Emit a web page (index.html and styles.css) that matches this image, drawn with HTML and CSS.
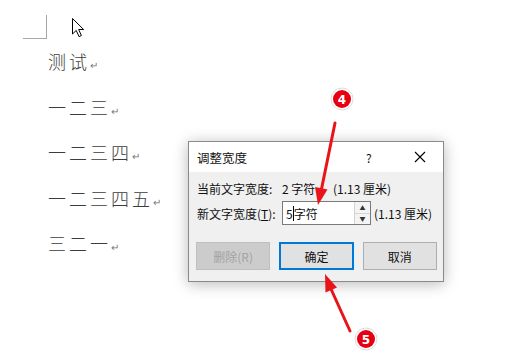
FILE: index.html
```html
<!DOCTYPE html>
<html lang="zh">
<head>
  <meta charset="UTF-8">
  <title>调整宽度</title>
  <link rel="stylesheet" href="styles.css">
</head>
<body>
  <!-- 文档区域 -->
  <div class="page">
    <div class="corner"></div>
    <div class="lines">
      <p>测试<span class="mark">↵</span></p>
      <p>一二三<span class="mark">↵</span></p>
      <p>一二三四<span class="mark">↵</span></p>
      <p>一二三四五<span class="mark">↵</span></p>
      <p>三二一<span class="mark">↵</span></p>
    </div>
  </div>

  <svg class="pointer" width="14" height="21" viewBox="0 0 14 21">
    <path d="M1.5 1.5 L1.5 17 L5.2 13.4 L8 19.6 L10.4 18.6 L7.7 12.5 L12.6 12.5 Z" fill="#fff" stroke="#000" stroke-width="1" stroke-linejoin="round"/>
  </svg>

  <!-- 对话框 -->
  <div class="dialog">
    <div class="titlebar">
      <span class="title">调整宽度</span>
      <span class="help">?</span>
      <span class="close">
        <svg width="12" height="12" viewBox="0 0 12 12"><path d="M1 1 L11 11 M11 1 L1 11" stroke="#000" stroke-width="1.1"/></svg>
      </span>
    </div>
    <div class="content">
      <div class="row">
        <span class="label">当前文字宽度:</span>
        <span class="value">2 字符</span>
        <span class="cm">(1.13 厘米)</span>
      </div>
      <div class="row">
        <span class="label">新文字宽度(<u>T</u>):</span>
        <div class="spin">
          <span class="text">5<span class="caret"></span>字符</span>
          <div class="arrows">
            <span class="btn">▲</span>
            <span class="btn">▼</span>
          </div>
        </div>
        <span class="cm2">(1.13 厘米)</span>
      </div>
      <div class="buttons">
        <button class="disabled">删除(R)</button>
        <button class="default">确定</button>
        <button>取消</button>
      </div>
    </div>
  </div>

  <!-- 标注 -->
  <svg class="notes" width="525" height="364" viewBox="0 0 525 364">
    <line x1="335" y1="123" x2="321.5" y2="189" stroke="#e8141a" stroke-width="3" stroke-linecap="round"/>
    <polygon points="318,205 327.5,189.5 315,187" fill="#e8141a"/>
    <line x1="350" y1="331" x2="331" y2="289" stroke="#e8141a" stroke-width="3" stroke-linecap="round"/>
    <polygon points="325,274 337,287.5 325.5,292.5" fill="#e8141a"/>

    <circle cx="342" cy="99" r="11" fill="#fff" stroke="#ddd" stroke-width="1"/>
    <circle cx="342" cy="99" r="9" fill="#e60012"/>
    <text x="342" y="103.5" class="num">4</text>

    <circle cx="366" cy="339" r="11" fill="#fff" stroke="#ddd" stroke-width="1"/>
    <circle cx="366" cy="339" r="9" fill="#e60012"/>
    <text x="366" y="343.5" class="num">5</text>
  </svg>
</body>
</html>
```
FILE: styles.css
```css
body {
  margin: 0;
  width: 525px;
  height: 364px;
  background: #fff;
  overflow: hidden;
  position: relative;
  font-family: "Noto Sans CJK SC", sans-serif;
}
.page {
  padding-top: 15px;
}
.corner {
  width: 23px;
  height: 23px;
  margin-left: 23px;
  border-right: 1px solid #a8a8a8;
  border-bottom: 1px solid #a8a8a8;
}
.lines {
  margin-top: 2px;
  padding-left: 48px;
}
.lines p {
  margin: 0;
  font-size: 18px;
  line-height: 41.5px;
  letter-spacing: 3px;
  color: #3c3c3c;
  font-weight: 300;
}
.mark {
  font-family: "DejaVu Sans", sans-serif;
  font-size: 10px;
  color: #777;
  letter-spacing: 0;
}
.pointer {
  position: absolute;
  left: 71px;
  top: 17px;
}
.dialog {
  position: absolute;
  left: 188px;
  top: 141px;
  width: 256px;
  height: 141px;
  box-sizing: border-box;
  border: 1px solid #8a8a8a;
  background: #f0f0f0;
  box-shadow: 0 2px 14px rgba(0, 0, 0, 0.28);
  font-size: 12px;
  color: #111;
}
.titlebar {
  height: 30px;
  background: #fff;
  display: flex;
  align-items: center;
  padding-left: 8px;
}
.title {
  flex: 1;
  font-size: 12.5px;
}
.help {
  width: 14px;
  font-size: 12px;
  margin-right: 34px;
}
.close {
  display: flex;
  margin-right: 17px;
}
.content {
  padding: 7px 6px 0 8px;
}
.row {
  display: flex;
  align-items: center;
  height: 18px;
}
.row + .row {
  margin-top: 4px;
  height: 24px;
}
.label {
  width: 85px;
}
.value {
  width: 51px;
}
.spin {
  width: 89px;
  height: 24px;
  box-sizing: border-box;
  border: 1px solid #7a7a7a;
  background: #fff;
  display: flex;
  align-items: center;
  padding-left: 3px;
}
.text {
  flex: 1;
  display: flex;
  align-items: center;
}
.caret {
  display: inline-block;
  width: 1px;
  height: 15px;
  background: #000;
}
.arrows {
  display: flex;
  flex-direction: column;
  width: 15px;
  height: 22px;
  border-left: 1px solid #d4d4d4;
}
.btn {
  flex: 1;
  display: flex;
  align-items: center;
  justify-content: center;
  font-size: 6px;
  color: #333;
  background: #f4f4f4;
  border-bottom: 1px solid #d4d4d4;
}
.btn + .btn {
  border-bottom: none;
}
.cm2 {
  margin-left: 3px;
}
.buttons {
  display: flex;
  gap: 9px;
  margin-top: 17px;
  margin-left: -1px;
}
.buttons button {
  width: 75px;
  height: 28px;
  box-sizing: border-box;
  border: 1px solid #adadad;
  background: #e1e1e1;
  font-family: "Noto Sans CJK SC", sans-serif;
  font-size: 12px;
  color: #111;
  padding: 0;
}
.buttons .disabled {
  background: #cccccc;
  border-color: #bfbfbf;
  color: #a3a3a3;
}
.buttons .default {
  border: 2px solid #0078d7;
}
.notes {
  position: absolute;
  left: 0;
  top: 0;
}
.num {
  fill: #fff;
  font-family: "DejaVu Sans", sans-serif;
  font-weight: bold;
  font-size: 12px;
  text-anchor: middle;
}
```
